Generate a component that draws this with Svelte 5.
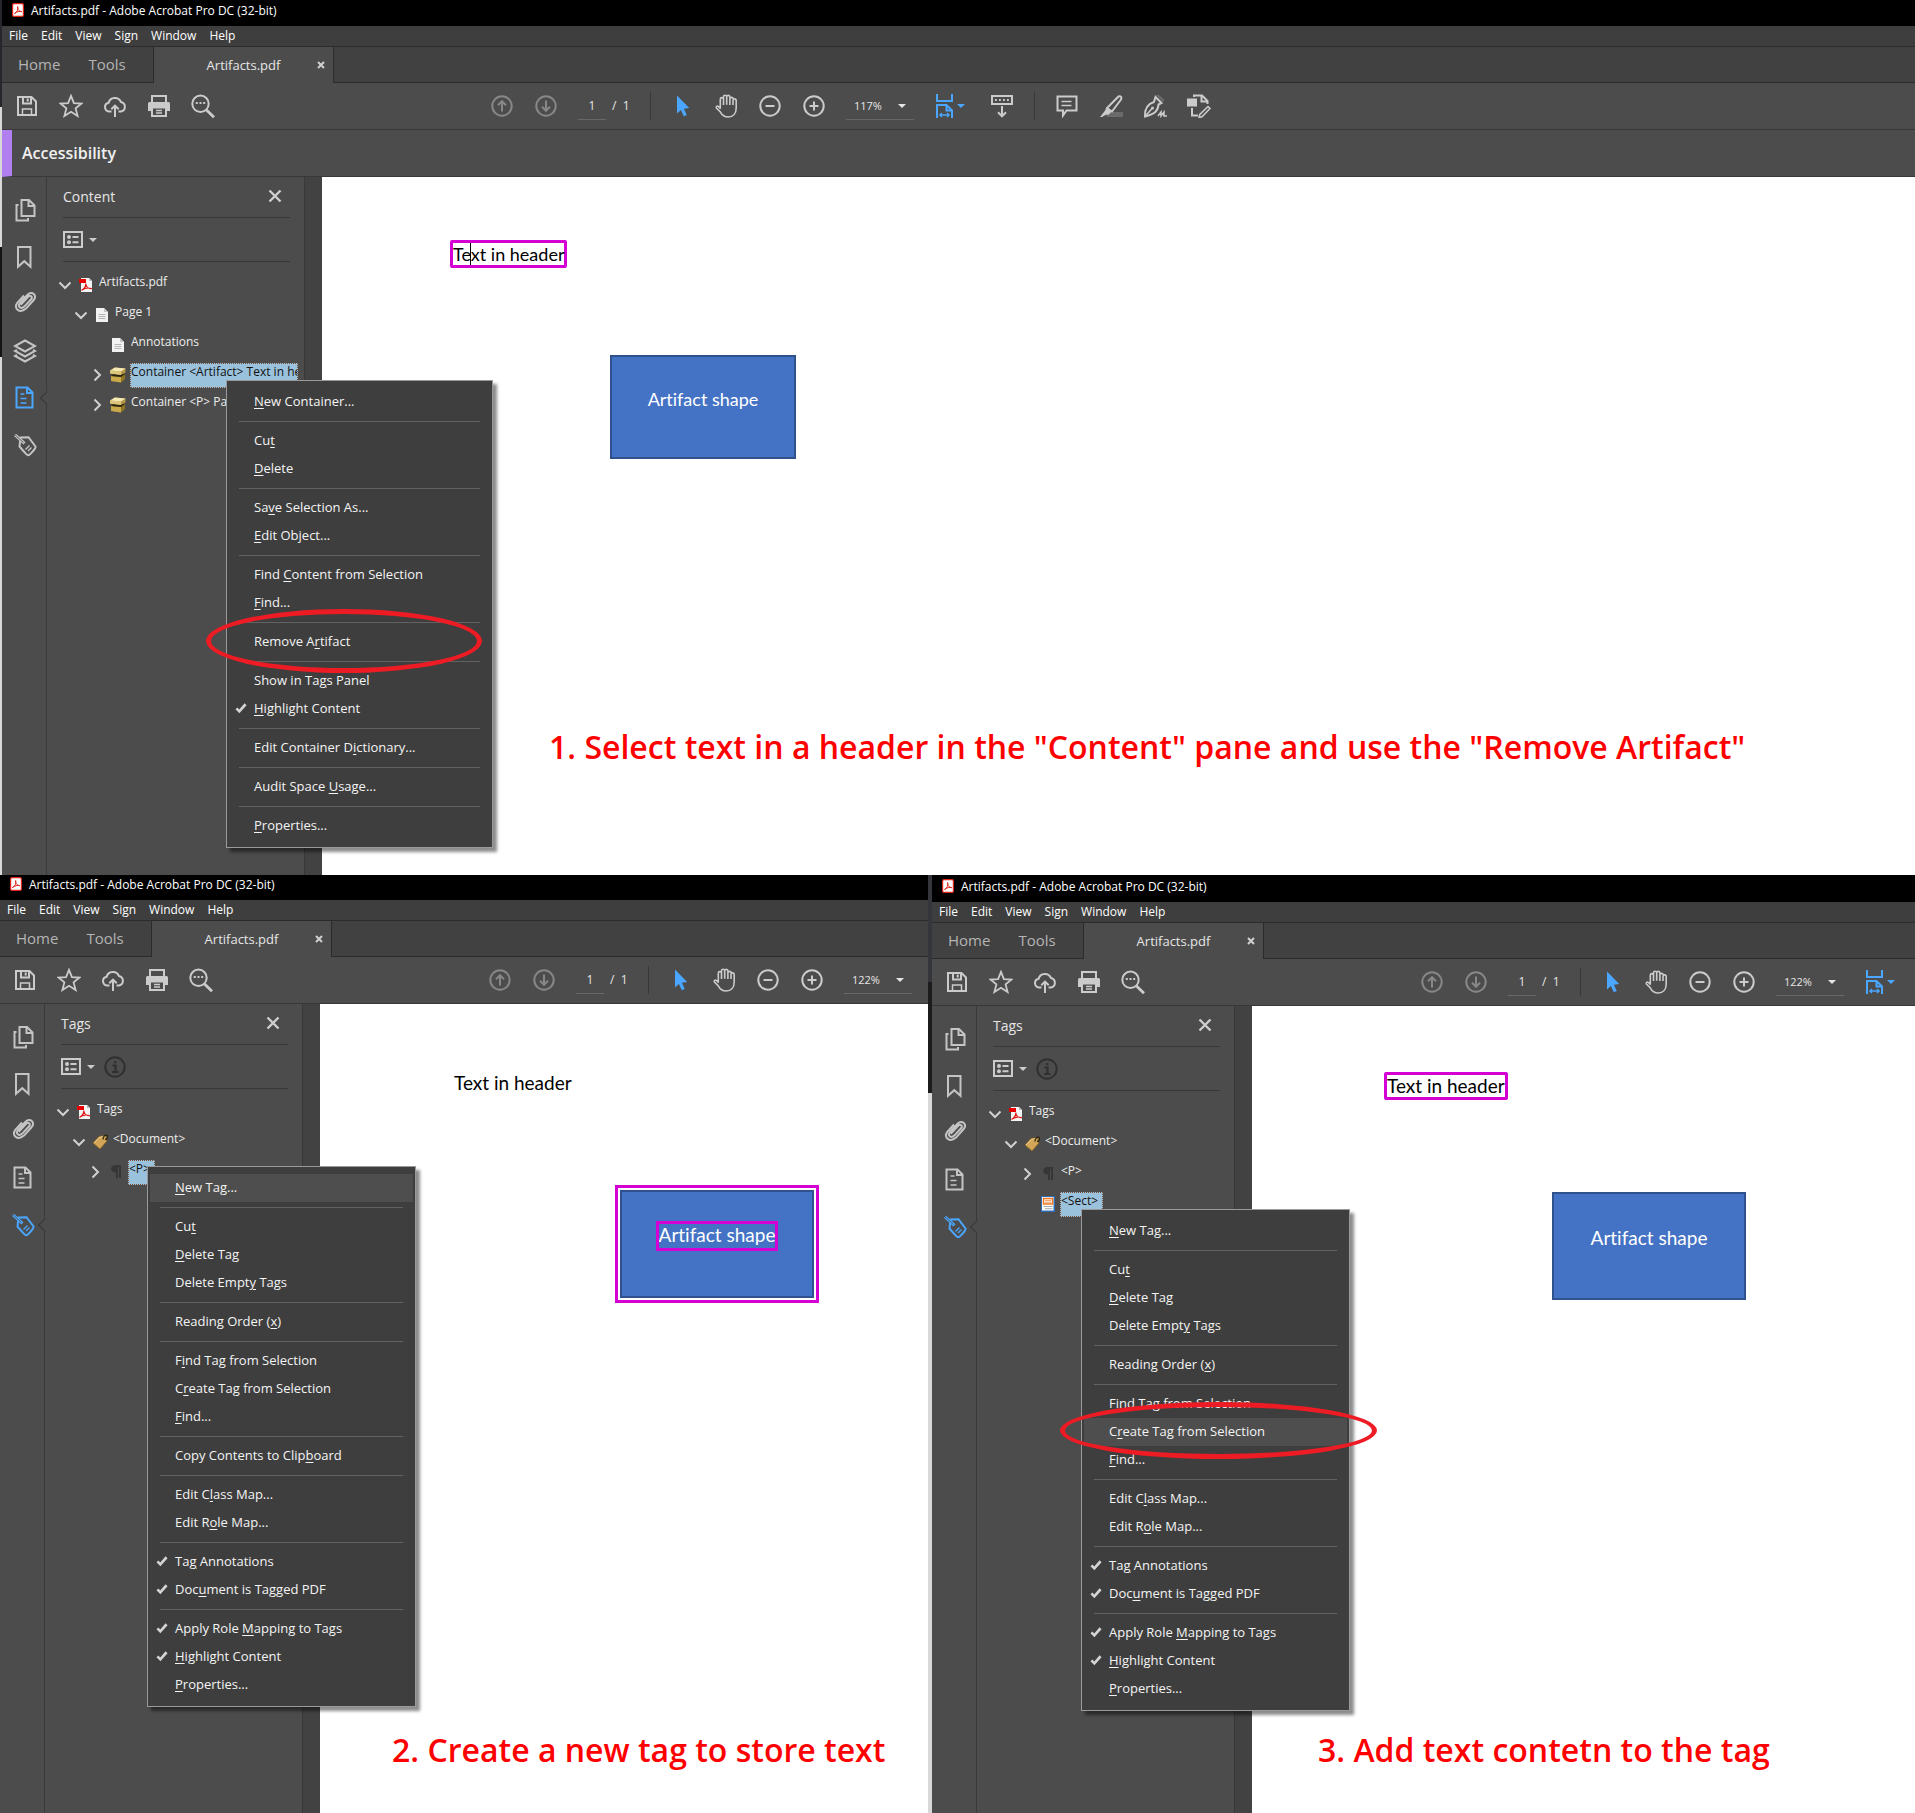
<script>
  const icons = {
    save: '<path d="M3 3h13.500L21 7.500V21H3z"/><path d="M8 3v6.500h8V3M12.700 4.500v3"/><path d="M7.500 21v-6h9v6" stroke-width="1.500"/>',
    star: '<path d="M12 1.800l2.900 7.300 7.700.4-6 4.900 2 7.600-6.600-4.300L5.400 22l2-7.600-6-4.900 7.700-.4z" stroke-width="1.800"/>',
    cloud: '<path d="M8.500 17.500H6a4.400 4.400 0 0 1-.4-8.700 6.500 6.500 0 0 1 12.300-.9 4.900 4.900 0 0 1 .1 9.600h-2.500"/><path d="M12 23V12M8.300 15.300L12 11.600l3.700 3.700"/>',
    print: '<path d="M5 8V2h14v6"/><path d="M2.500 8h19A1.500 1.500 0 0 1 23 9.500V17h-3.500v-3.500h-15V17H1V9.500A1.500 1.500 0 0 1 2.500 8z" fill="currentColor" stroke="none"/><path d="M5 13.500h14V22H5z"/><path d="M9 16.500h6M9 19h6" stroke-width="1.300"/>',
    find: '<circle cx="9.500" cy="9.800" r="8.200"/><path d="M15.500 16l7.500 7.300" stroke-width="2.800"/><path d="M4.800 9h2M8.500 9h2M12.200 9h2"/>',
    up: '<circle cx="12" cy="12" r="9.700"/><path d="M12 17.500V7.500M8 11.200l4-4 4 4"/>',
    down: '<circle cx="12" cy="12" r="9.700"/><path d="M12 6.500v10M8 12.800l4 4 4-4"/>',
    cursor: '<path d="M7 1.500v18l3.900-3.600 2.900 6.400 3-1.300-2.900-6.200 5.300-.7z" fill="currentColor" stroke="none"/>',
    hand: '<path d="M6.300 14.500V5.200a1.600 1.600 0 0 1 3.200 0V11M9.500 10.500V2.800a1.600 1.600 0 0 1 3.200 0v8M12.700 10.500V2.900a1.600 1.600 0 0 1 3.200.1v8M15.900 11V5a1.600 1.600 0 0 1 3.200 0v0M19 11V6.500a1.500 1.500 0 0 1 3.200 0V14c0 5.500-3 9-8 9-4.200 0-6.500-2.500-8-5.200L2.400 14c-.8-1.400.8-2.500 2-1.500l2.200 2.200" stroke-width="1.600"/>',
    minus: '<circle cx="12" cy="12" r="9.700"/><path d="M7.500 12h9"/>',
    plus: '<circle cx="12" cy="12" r="9.700"/><path d="M7.500 12h9M12 7.500v9"/>',
    fit: '<path d="M4 0v7h15V0M4 24V11h9.500L19 16.500V24M13.500 11v5.500H19"/><path d="M7 21h9M9 19l-2.200 2L9 23M14 19l2.200 2-2.200 2" stroke-width="1.300"/>',
    keys: '<path d="M2 2h20v8H2z"/><path d="M5 6h14" stroke-dasharray="1.800 2.200"/><path d="M12 12v10M8 18.300l4 4 4-4"/>',
    comment: '<path d="M2.500 2.500h19v14h-10L8 21.500v-5H2.500z"/><path d="M6.500 7.500h10M6.500 11.500h10" stroke-width="1.400"/>',
    marker: '<path d="M10 18h14v5H7z" fill="#6b6b6b" stroke="none"/><path d="M19.500 2.500c2.500-.8 3.500 1 2.500 3L13 17.500l-5-3.500z"/><path d="M7.500 14l5 3.800-3 3H7L3 23H1l4-5z" fill="currentColor" stroke="none"/>',
    pen: '<path d="M12.500 3l6 6-3 1.500C15 17 12 20 2 22.500 1.500 13 6 9.500 11 8z" /><path d="M2 22.500l7-8" stroke-width="1.500"/><path d="M13 1l7 7 1.500-2-5.500-5z" fill="#6b6b6b" stroke="none"/><circle cx="9.500" cy="14" r="1.500" fill="currentColor" stroke="none"/><path d="M15 22l3-4v4l3-4v4h3" stroke-width="1.500"/>',
    edit: '<path d="M1 5.500h8v6H1z" fill="currentColor"/><path d="M7 3V1.500h8L20.500 7v3M14.500 2v5.500H20M5 14v7.500h6"/><path d="M21 12.500l2 2-8 8.300-3 .7.800-3z" stroke-width="1.600"/>',
    pages: '<path d="M8.500 2H16l5.500 5.500V18h-13zM15.500 2v6h6"/><path d="M5.500 7H3.500v15.500H15V20"/>',
    bookmark: '<path d="M5 2h12.500v19.800l-6.200-5.600L5 21.800z"/>',
    clip: '<g transform="translate(0 -3)"><path d="M7.700 15.700l7.500-8c2.200-2.200 4.800.3 2.900 2.600l-6.800 7.300c-3.500 3.300-7.200-.3-4.200-3.800l7.400-8c4.700-4.200 9.800.5 6.200 5.200l-7.700 8.600C6.500 25 .5 19.500 4.300 13.800L11 6.500"/></g>',
    layers: '<path d="M12 1.500L22 7l-10 5.500L2 7z"/><path d="M4 10.800L2 12l10 5.500L22 12l-2-1.200M4 15.800L2 17l10 5.500L22 17l-2-1.200"/>',
    content: '<path d="M3.500 1.500h11l5 5v15h-16zM14 1.500V7h5.500"/><path d="M7.500 8h4M7.500 12.500h6M7.500 17h6" stroke-width="1.600"/>',
    tags: '<path d="M7.500 4.500l8-.3 7 9.300c.8 1.400-5.500 8.800-7.500 8.800-1 0-8.500-8.800-8.500-8.800z"/><path d="M2 1.800l9.500 8.500" stroke-width="3"/><path d="M1.500 1.500l9 8" stroke="#4c4c4c" stroke-width=".8"/><path d="M12.500 16.500l4-4M15 18l3.500-3.500" stroke-width="1.400"/>',
    list: '<path d="M2 4h18v15H2z"/><circle cx="7" cy="9" r="2" fill="currentColor" stroke="none"/><circle cx="7" cy="14.300" r="2" fill="currentColor" stroke="none"/><path d="M10.500 9h6M10.500 14.300h6"/>',
    info: '<circle cx="12" cy="12" r="9.700"/><path d="M9.500 10.500h3v7M9 17h6.500M12.300 6v2.200" stroke-width="2.200"/>',
    close: '<path d="M6.500 6.500l11 11M17.500 6.500l-11 11" stroke-width="2.400"/>',
    openArrow: '<path d="M6.500 9.500L12 15l5.500-5.500"/>',
    shutArrow: '<path d="M9.500 6.500L15 12l-5.500 5.500"/>',
    check: '<path d="M6.500 12.500l3.500 3.500 7.500-8.500" stroke-width="3.200"/>'
  };

  const nodeIcons = {
    pdf: '<path d="M3 1h8l3 3v11H3z" fill="#f4f4f4"/><path d="M11 1v3h3z" fill="#b8b8b8"/><path d="M1 2h7v4H1z" fill="#e80000"/><path d="M3.500 13.500C6 12 8 9 7.800 6.500M7.800 7c.5 3 3 5 6 4.700M4 13c3-2 6-2.500 9.500-1.500" fill="none" stroke="#e01010" stroke-width="1.200"/>',
    page: '<path d="M2 1h8l4 4v10H2z" fill="#f2f2f2"/><path d="M10 1v4h4z" fill="#c4c4c4"/><path d="M4.500 7.500h7M4.500 9.500h7M4.500 11.500h7" stroke="#b5b5b5"/>',
    box: '<path d="M1 9l3-2h11v5l-4 3.500-10-1.500z" fill="#8f7422"/><path d="M1 9l10 1v5.500L1 14z" fill="#c9a94c"/><path d="M1 9l3-2h11l-4 3z" fill="#2a2410"/><path d="M0 3.500L5 .5l10.500 1v4L11 8 0 6.500z" fill="#b39644"/><path d="M0 3.500L5 .5l10.500 1L11 4.500z" fill="#f5e9b4"/><path d="M0 3.500l11 1V8L0 6.500z" fill="#dcc67c"/>',
    tag: '<path d="M1 9l6-6.500 7-1 .500 6L8 15z" fill="#d2a656" stroke="#8c6420" stroke-width=".8"/><path d="M2 9l5.500-5.700 5.500-.8" fill="none" stroke="#f0d090"/><path d="M11 5.500c0-3 2-5 4-4s0 4-2 4" fill="none" stroke="#2e2612" stroke-width="1.300"/>',
    para: '<path d="M8 1h5v13h-2V3h-1v11H8V8.500C1.500 8.500 1.500 1 8 1z" fill="#363636"/>',
    sect: '<path d="M1 0h14v16H1z" fill="#2d6db5"/><path d="M2 1h11.500v13.500H2z" fill="#fff"/><path d="M3.500 2.500h9v5.500h-9z" fill="#fff3e6" stroke="#f07820" stroke-width="1.400"/><path d="M5 4.500h6M5 6.300h6" stroke="#e88a48" stroke-width=".7"/><path d="M3.500 10.500h9M5 12.700h7.500" stroke="#a8a8a8"/>'
  };

  const barMenus = ['File', 'Edit', 'View', 'Sign', 'Window', 'Help'];

  // "&" stands before the access key; "-" is a separator.
  const tagMenuHead = ['&New Tag...', '-', 'Cu&t', '&Delete Tag', 'Delete Empt&y Tags', '-', 'Reading Order (&x)', '-',
    'F&ind Tag from Selection', 'C&reate Tag from Selection', '&Find...', '-'];
  const tagMenuTail = ['Edit C&lass Map...', 'Edit R&ole Map...', '-', 'Ta&g Annotations', 'Doc&ument is Tagged PDF', '-',
    'Apply Role &Mapping to Tags', '&Highlight Content', '&Properties...'];
  const tagChecks = ['Ta&g Annotations', 'Doc&ument is Tagged PDF', 'Apply Role &Mapping to Tags', '&Highlight Content'];

  const windows = [
    {
      id: 'remove', zoom: '117%', accessibility: true, fit: true, review: true, edge: true,
      rail: ['pages', 'bookmark', 'clip', 'layers', 'content', 'tags'], active: 'content', panel: 'Content', info: false,
      tree: [
        { depth: 0, arrow: 'openArrow', icon: 'pdf', text: 'Artifacts.pdf' },
        { depth: 1, arrow: 'openArrow', icon: 'page', text: 'Page 1' },
        { depth: 2, icon: 'page', text: 'Annotations' },
        { depth: 2, arrow: 'shutArrow', icon: 'box', text: 'Container <Artifact> Text in header', selected: true },
        { depth: 2, arrow: 'shutArrow', icon: 'box', text: 'Container <P> Path' }
      ],
      menu: ['&New Container...', '-', 'Cu&t', '&Delete', '-', 'Sa&ve Selection As...', '&Edit Object...', '-',
        'Find &Content from Selection', '&Find...', '-', 'Remove A&rtifact', '-', 'Show in Ta&gs Panel', '&Highlight Content', '-',
        'Edit Container D&ictionary...', '-', 'Audit Space &Usage...', '-', '&Properties...'],
      checks: ['&Highlight Content'], hover: '', ring: true, caret: true, boxed: true,
      caption: '1. Select text in a header in the "Content" pane and use the "Remove Artifact"'
    },
    {
      id: 'create', zoom: '122%', accessibility: false, fit: false, review: false, edge: false,
      rail: ['pages', 'bookmark', 'clip', 'content', 'tags'], active: 'tags', panel: 'Tags', info: true,
      tree: [
        { depth: 0, arrow: 'openArrow', icon: 'pdf', text: 'Tags' },
        { depth: 1, arrow: 'openArrow', icon: 'tag', text: '<Document>' },
        { depth: 2, arrow: 'shutArrow', icon: 'para', text: '<P>', selected: true }
      ],
      menu: [...tagMenuHead, 'Copy Contents to Clip&board', '-', ...tagMenuTail],
      checks: tagChecks, hover: '&New Tag...', ring: false, caret: false, boxed: false,
      caption: '2. Create a new tag to store text'
    },
    {
      id: 'add', zoom: '122%', accessibility: false, fit: true, review: false, edge: true,
      rail: ['pages', 'bookmark', 'clip', 'content', 'tags'], active: 'tags', panel: 'Tags', info: true,
      tree: [
        { depth: 0, arrow: 'openArrow', icon: 'pdf', text: 'Tags' },
        { depth: 1, arrow: 'openArrow', icon: 'tag', text: '<Document>' },
        { depth: 2, arrow: 'shutArrow', icon: 'para', text: '<P>' },
        { depth: 2, icon: 'sect', text: '<Sect>', selected: true }
      ],
      menu: [...tagMenuHead, ...tagMenuTail],
      checks: tagChecks, hover: 'C&reate Tag from Selection', ring: true, caret: false, boxed: true,
      caption: '3. Add text contetn to the tag'
    }
  ];

  function split(label) {
    const i = label.indexOf('&');
    return [label.slice(0, i), label[i + 1], label.slice(i + 2)];
  }
</script>

{#snippet icon(name)}
  <svg class="icon" viewBox="0 0 24 24" fill="none" stroke="currentColor" stroke-width="2" aria-hidden="true">{@html icons[name]}</svg>
{/snippet}

{#snippet tool(name, label)}
  <button class="tool {name}" aria-label={label}>{@render icon(name)}</button>
{/snippet}

<main class="board">
  {#each windows as w (w.id)}
    <section class="frame {w.id}">
      {#if w.edge}<div class="edge"></div>{/if}
      <div class="window">
        <header class="title">
          <svg class="logo" viewBox="0 0 12 14" aria-hidden="true">
            <rect x=".6" y=".6" width="10.800" height="12.800" rx="1.500" fill="#fff" stroke="#e2231a" stroke-width="1.200" />
            <path d="M2.500 10.500C5 9.500 6.500 6 5.700 3.500c-.8 2.500 1.500 5 4 5.200-2-.8-5 0-7.200 1.800z" fill="none" stroke="#e2231a" />
          </svg>
          <span>Artifacts.pdf - Adobe Acrobat Pro DC (32-bit)</span>
        </header>

        <nav class="menubar">
          {#each barMenus as m}<button>{m}</button>{/each}
        </nav>

        <div class="tabs">
          <div class="home"><button>Home</button><button>Tools</button></div>
          <div class="tab">
            <button class="name">Artifacts.pdf</button>
            <button class="shut" aria-label="Close tab">
              <svg viewBox="0 0 8 8" aria-hidden="true"><path d="M1 1l6 6M7 1L1 7" stroke="currentColor" stroke-width="2" /></svg>
            </button>
          </div>
          <div class="rest"></div>
        </div>

        <div class="toolbar">
          <div class="files">
            {@render tool('save', 'Save')}
            {@render tool('star', 'Star')}
            {@render tool('cloud', 'Upload')}
            {@render tool('print', 'Print')}
            {@render tool('find', 'Find')}
          </div>
          {@render tool('up', 'Previous page')}
          {@render tool('down', 'Next page')}
          <input class="number" aria-label="Page number" value="1" />
          <span class="total">/&nbsp; 1</span>
          <span class="divider first"></span>
          {@render tool('cursor', 'Select')}
          {@render tool('hand', 'Pan')}
          {@render tool('minus', 'Zoom out')}
          {@render tool('plus', 'Zoom in')}
          <div class="zoom">
            <select aria-label="Zoom level"><option>{w.zoom}</option></select>
            <span class="drop"></span>
          </div>
          {#if w.fit}
            <button class="tool fit" aria-label="Fit width">{@render icon('fit')}<span class="drop"></span></button>
          {/if}
          {#if w.review}
            {@render tool('keys', 'Show toolbar')}
            <span class="divider"></span>
            {@render tool('comment', 'Comment')}
            {@render tool('marker', 'Highlight')}
            {@render tool('pen', 'Sign')}
            {@render tool('edit', 'Edit')}
          {/if}
        </div>

        {#if w.accessibility}
          <h2 class="mode">Accessibility</h2>
        {/if}

        <div class="body">
          <nav class="rail">
            {#each w.rail as r}
              <button class:active={r === w.active} aria-label={r}>{@render icon(r)}</button>
            {/each}
          </nav>

          <aside class="panel">
            <div class="head">
              <h3>{w.panel}</h3>
              <button aria-label="Close panel">{@render icon('close')}</button>
            </div>
            <div class="options">
              <button class="list" aria-label="Options">{@render icon('list')}<span class="drop"></span></button>
              {#if w.info}<button class="info" aria-label="Info">{@render icon('info')}</button>{/if}
            </div>
            <ul class="tree">
              {#each w.tree as n}
                <li class="depth{n.depth}">
                  <span class="arrow">{#if n.arrow}{@render icon(n.arrow)}{/if}</span>
                  <svg class="node" viewBox="0 0 16 16" aria-hidden="true">{@html nodeIcons[n.icon]}</svg>
                  <span class="label" class:selected={n.selected}>{n.text}</span>
                </li>
              {/each}
            </ul>
          </aside>

          <div class="gutter"></div>

          <article class="page">
            <p class="text" class:marked={w.boxed}>Text in header{#if w.caret}<span class="caret"></span>{/if}</p>
            <div class="shape"><span>Artifact shape</span></div>
            <p class="caption">{w.caption}</p>
          </article>
        </div>

        <ul class="menu" role="menu">
          {#each w.menu as item}
            {#if item === '-'}
              <li class="separator" role="separator"></li>
            {:else}
              {@const parts = split(item)}
              <li role="none">
                <button role="menuitem" class:hover={item === w.hover}>
                  <span class="tick">{#if w.checks.includes(item)}{@render icon('check')}{/if}</span><span>{parts[0]}<u>{parts[1]}</u>{parts[2]}</span>
                </button>
              </li>
            {/if}
          {/each}
        </ul>

        {#if w.ring}<div class="ring"></div>{/if}
      </div>
    </section>
  {/each}
</main>

<style>
  :global(body) { background: #fff; }

  .board {
    display: grid;
    grid-template-columns: 928fr 987fr;
    grid-template-rows: 875fr 938fr;
    min-height: 100vh;
    font-family: "Open Sans", "Noto Sans", sans-serif;
    font-size: 12px;
    line-height: 16px;
    color: #e6e6e6;
  }
  button, input, select { font: inherit; color: inherit; background: none; border: 0; padding: 0; margin: 0; }
  ul, h2, h3, p { margin: 0; padding: 0; list-style: none; }
  .icon { display: block; width: 24px; height: 24px; flex: none; }

  .frame { display: flex; min-width: 0; overflow: hidden; }
  .remove { grid-column: 1 / 3; }
  .edge { flex: none; width: 2px; background: linear-gradient(#26262b 107px, #d8d8d8 107px 247px, #141414 247px 357px, #d8d8d8 357px); }
  .add .edge { width: 4px; background: linear-gradient(#34363b 107px, #1c1c1c 107px 218px, #d8d8d8 218px); }
  .window { position: relative; flex: 1; min-width: 0; display: flex; flex-direction: column; background: #4c4c4c; }

  .title { display: flex; align-items: flex-end; gap: 7px; height: 26px; box-sizing: border-box; padding: 0 10px 7px; background: #000; color: #fff; white-space: nowrap; }
  .create .title { height: 25px; }
  .add .title { height: 27px; }
  .logo { width: 12px; height: 14px; margin-bottom: 2px; }

  .menubar { display: flex; gap: 13px; height: 20px; padding-left: 7px; background: #3e3e3e; border-bottom: 1px solid #2b2b2b; color: #fff; }
  .tabs { display: flex; height: 36px; font-size: 13px; }
  .home { display: flex; gap: 28px; width: 151px; box-sizing: border-box; padding-left: 16px; padding-bottom: 2px; background: #414141; border-bottom: 1px solid #2b2b2b; color: #b4b4b4; font-size: 15px; }
  .tab { display: flex; align-items: center; width: 179px; border: solid #2b2b2b; border-width: 0 1px; background: #4c4c4c; }
  .name { flex: 1; padding-left: 24px; }
  .shut { width: 24px; padding-bottom: 1px; color: #d0d0d0; }
  .shut svg { display: block; width: 8px; height: 8px; margin: auto; }
  .rest { flex: 1; background: #414141; border-bottom: 1px solid #2b2b2b; }

  .toolbar { display: flex; align-items: center; height: 46px; border-bottom: 1px solid #383838; overflow: hidden; }
  .files { display: flex; flex: none; width: 475px; padding-left: 3px; }
  .tool { display: flex; justify-content: center; align-items: center; flex: none; width: 44px; height: 44px; color: #cbcbcb; }
  .up, .down { color: #878787; }
  .cursor, .fit { color: #4ba6ff; }
  .fit { width: 54px; margin-left: 8px; margin-right: 4px; }
  .number { box-sizing: border-box; width: 28px; height: 28px; margin-left: 10px; border-bottom: 1px solid #686868; text-align: center; }
  .total { width: 18px; margin-left: 6px; white-space: nowrap; }
  .divider { flex: none; width: 1px; height: 28px; margin: 0 10px; background: #383838; }
  .first { margin: 0 9px 0 20px; }
  .zoom { display: flex; align-items: center; flex: none; box-sizing: border-box; width: 68px; height: 28px; margin-left: 10px; padding: 0 8px; border-bottom: 1px solid #686868; }
  select { flex: 1; min-width: 0; appearance: none; font-size: 11px; }
  .drop { flex: none; border: 4px solid transparent; border-top-color: currentColor; border-bottom: 0; }

  .mode { display: flex; align-items: center; height: 46px; padding-left: 10px; border-left: 10px solid #b27ff0; border-bottom: 1px solid #383838; font-size: 16px; font-weight: 600; color: #f0f0f0; }

  .body { display: flex; flex: 1; min-height: 0; }
  .rail { display: flex; flex-direction: column; flex: none; width: 44px; padding-top: 9px; border-right: 1px solid #3a3a3a; color: #c4c4c4; }
  .rail button { position: relative; display: flex; align-items: center; height: 47px; padding-left: 11px; }
  .rail .active { color: #4ba6ff; }
  .rail .active::after { content: ""; position: absolute; right: -6px; width: 10px; height: 10px; box-sizing: border-box; border: solid #383838; border-width: 0 0 1px 1px; background: #4c4c4c; transform: rotate(45deg); }

  .panel { flex: none; width: 257px; box-sizing: border-box; overflow: hidden; }
  .head { display: flex; align-items: center; justify-content: space-between; height: 40px; margin: 0 14px 0 16px; border-bottom: 1px solid #383838; }
  h3 { font-size: 14px; font-weight: 400; }
  .head button { margin-right: 3px; padding-bottom: 2px; color: #cfcfcf; }
  .options { display: flex; align-items: center; gap: 8px; height: 43px; margin: 0 14px 0 16px; border-bottom: 1px solid #383838; }
  .list { display: flex; align-items: center; gap: 3px; margin-left: -1px; color: #cbcbcb; }
  .info { color: #303030; }
  .tree { padding-top: 11px; }
  .tree li { display: flex; align-items: center; height: 25px; padding-left: 6px; padding-bottom: 5px; padding-right: 6px; color: #ececec; }
  .tree .depth1 { padding-left: 22px; }
  .tree .depth2 { padding-left: 38px; }
  .arrow { width: 24px; height: 24px; flex: none; margin-bottom: 2px; color: #d0d0d0; }
  .node { flex: none; width: 16px; height: 16px; margin: 0 4px 2px 1px; }
  .label { height: 23px; border: 1px dotted transparent; white-space: nowrap; overflow: hidden; padding-right: 4px; }
  .selected { background: #9bc2dc; border-color: #7a4a30; color: #111; }

  .gutter { flex: none; width: 18px; box-sizing: border-box; background: #424242; border-left: 1px solid #383838; }

  .page { position: relative; flex: 1; min-width: 0; background: #fff; color: #000; overflow: hidden; }
  .text, .shape { position: absolute; font-family: Lato, "Open Sans", sans-serif; font-size: 18px; line-height: 22px; white-space: nowrap; font-variant-ligatures: none; }
  .marked { border: 3px solid #d400d4; border-radius: 2px; }
  .caret { position: absolute; left: 17px; top: 0; width: 1px; height: 22px; background: #000; }
  .shape { display: flex; justify-content: center; align-items: flex-start; box-sizing: border-box; border: 2px solid #2f528f; background: #4472c4; color: #fff; }
  .remove .text { left: 128px; top: 63px; }
  .remove .shape { left: 288px; top: 178px; width: 186px; height: 104px; padding-top: 31px; }
  .create .text, .create .shape, .add .text, .add .shape { font-size: 19px; }
  .create .text { left: 134px; top: 68px; }
  .create .shape { left: 300px; top: 186px; width: 194px; height: 108px; padding-top: 32px; outline: 3px solid #d400d4; outline-offset: 2px; }
  .create .shape span { height: 24px; outline: 3px solid #d400d4; }
  .add .text { left: 132px; top: 66px; }
  .add .shape { left: 300px; top: 186px; width: 194px; height: 108px; padding-top: 33px; }

  .caption { position: absolute; left: 227px; top: 548px; font-size: 32px; line-height: 44px; font-weight: 600; color: #f00; white-space: nowrap; }
  .create .caption { left: 72px; top: 724px; }
  .add .caption { left: 66px; top: 722px; }

  .menu { position: absolute; width: 269px; box-sizing: border-box; padding: 7px 2px; border: 1px solid #9a9a9a; background: #3e3e3e; box-shadow: 4px 4px 3px rgba(0, 0, 0, .45); color: #f4f4f4; font-size: 13px; }
  .remove .menu { left: 224px; top: 380px; width: 267px; }
  .create .menu { left: 147px; top: 291px; }
  .add .menu { left: 149px; top: 334px; }
  .menu button { display: flex; align-items: center; width: 100%; height: 28px; padding-bottom: 2px; text-align: left; white-space: nowrap; }
  .menu .hover { background: #4e4e4e; }
  .tick { width: 23px; margin-left: 2px; color: #d4d4d4; }
  .tick :global(.icon) { width: 20px; height: 20px; }
  u { text-underline-offset: 2px; text-decoration-thickness: 1px; }
  .separator { height: 1px; margin: 5px 10px; background: #626262; }

  .ring { position: absolute; box-sizing: border-box; border: 5px solid #ed1c24; border-radius: 50%; }
  .remove .ring { left: 204px; top: 609px; width: 276px; height: 64px; }
  .add .ring { left: 128px; top: 527px; width: 317px; height: 57px; }
</style>
